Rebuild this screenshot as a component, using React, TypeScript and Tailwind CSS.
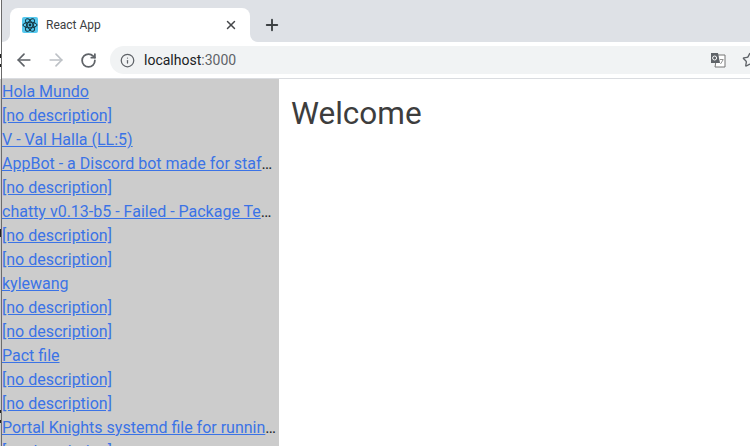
import { ArrowLeft, ArrowRight, Info, Plus, RotateCw, Star, X } from "lucide-react";

const links = [
  "Hola Mundo",
  "[no description]",
  "V - Val Halla (LL:5)",
  "AppBot - a Discord bot made for staff applications",
  "[no description]",
  "chatty v0.13-b5 - Failed - Package Tests Results",
  "[no description]",
  "[no description]",
  "kylewang",
  "[no description]",
  "[no description]",
  "Pact file",
  "[no description]",
  "[no description]",
  "Portal Knights systemd file for running a server",
  "[no description]",
];

function ReactLogo() {
  return (
    <svg width="16" height="16" viewBox="0 0 16 16" className="rounded-[2px] bg-[#56c8ee]">
      <g fill="none" stroke="#12323d" strokeWidth="1">
        <ellipse cx="8" cy="8" rx="7" ry="2.8" />
        <ellipse cx="8" cy="8" rx="7" ry="2.8" transform="rotate(60 8 8)" />
        <ellipse cx="8" cy="8" rx="7" ry="2.8" transform="rotate(120 8 8)" />
      </g>
      <circle cx="8" cy="8" r="1.4" fill="#12323d" />
    </svg>
  );
}

function TranslateIcon() {
  return (
    <svg width="16" height="16" viewBox="0 0 16 16">
      <path d="M7 3h8v12H5z" fill="#fff" stroke="#757575" strokeWidth="1" />
      <path d="M1 1h7l2 10H1z" fill="#5f6368" />
      <circle cx="4.6" cy="6" r="2" fill="none" stroke="#fff" strokeWidth="1" />
      <path d="M10 7.5h3.5M10.5 12l2.5-4" fill="none" stroke="#757575" strokeWidth="0.8" />
    </svg>
  );
}

// the little flare where the tab meets the toolbar
function TabFlare({ side }: { side: "left" | "right" }) {
  return (
    <div className={side === "left" ? "absolute -left-2 bottom-0 h-2 w-2 bg-white" : "absolute -right-2 bottom-0 h-2 w-2 bg-white"}>
      <div className={side === "left" ? "h-2 w-2 rounded-br-lg bg-[#dee1e6]" : "h-2 w-2 rounded-bl-lg bg-[#dee1e6]"} />
    </div>
  );
}

export default function App() {
  return (
    <div className="relative h-[446px] w-[750px] overflow-hidden bg-white pl-px font-['Roboto',sans-serif]">
      {/* stray window edge on the far left */}
      <div className="absolute left-0 top-[79px] h-[367px] w-px bg-[#cccccc]" />
      <div className="absolute left-0 top-[54px] h-[4px] w-px bg-[#222222]" />
      <div className="absolute left-0 top-[64px] h-[3px] w-px bg-[#222222]" />
      <div className="absolute left-0 top-[229px] h-[8px] w-px bg-[#222222]" />
      <div className="absolute left-0 top-[410px] h-[3px] w-px bg-[#222222]" />
      <div className="absolute left-0 top-[420px] h-[3px] w-px bg-[#222222]" />

      <div className="h-full border-l border-[#6b6b6b]">
        <div className="flex h-[42px] items-end bg-[#dee1e6] pl-2">
          <div className="relative flex h-[34px] w-[240px] items-center gap-2 rounded-t-lg bg-white pl-3 pr-3">
            <TabFlare side="left" />
            <TabFlare side="right" />
            <ReactLogo />
            <span className="flex-1 text-xs text-[#3c4043]">React App</span>
            <X size={14} strokeWidth={2.5} className="text-[#45474a]" />
          </div>
          <div className="ml-[13px] flex h-[34px] items-center">
            <Plus size={18} strokeWidth={2.5} className="text-[#3c4043]" />
          </div>
        </div>
        <div className="flex h-[37px] items-center border-b border-[#dadce0] bg-white pl-3">
          <ArrowLeft size={20} strokeWidth={2} className="text-[#5f6368]" />
          <ArrowRight size={20} strokeWidth={2} className="ml-3 text-[#bdc1c6]" />
          <RotateCw size={17} strokeWidth={2.5} className="ml-[14px] text-[#5f6368]" />
          <div className="ml-[13px] flex h-7 flex-1 items-center rounded-l-full bg-[#f1f3f4] pl-[10px]">
            <Info size={15} strokeWidth={2} className="text-[#5f6368]" />
            <span className="ml-[9px] text-sm text-[#202124]">
              localhost<span className="text-[#5f6368]">:3000</span>
            </span>
            <div className="ml-auto flex items-center gap-4 overflow-hidden">
              <TranslateIcon />
              <Star size={16} strokeWidth={2} className="-mr-2 text-[#5f6368]" />
            </div>
          </div>
        </div>
        <div className="flex h-[367px]">
          <div className="w-[277px] shrink-0 overflow-hidden bg-[#cccccc] pt-px pr-[2px]">
            {links.map((text, i) => (
              <div key={i} className="truncate text-base leading-6 text-[#212529]">
                <a href="#" className="text-[#3b73e6] underline">
                  {text}
                </a>
              </div>
            ))}
          </div>
          <div className="flex-1 pl-3 pt-[10px]">
            <h1 className="text-[31.5px] leading-[50px] font-normal text-[#3d3d3d]">Welcome</h1>
          </div>
        </div>
      </div>
    </div>
  );
}
